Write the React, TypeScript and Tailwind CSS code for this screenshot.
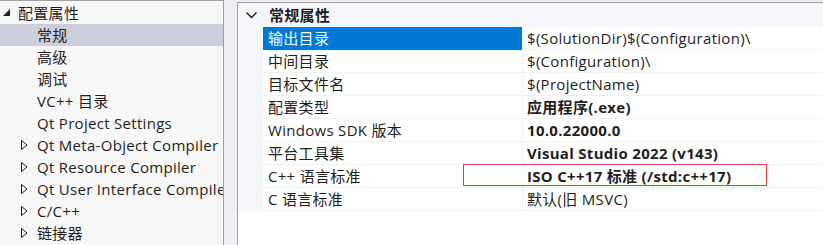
import React from "react";

const leftItems: { label: string; kind: "root" | "leaf" | "collapsed"; selected?: boolean }[] = [
  { label: "配置属性", kind: "root" },
  { label: "常规", kind: "leaf", selected: true },
  { label: "高级", kind: "leaf" },
  { label: "调试", kind: "leaf" },
  { label: "VC++ 目录", kind: "leaf" },
  { label: "Qt Project Settings", kind: "leaf" },
  { label: "Qt Meta-Object Compiler", kind: "collapsed" },
  { label: "Qt Resource Compiler", kind: "collapsed" },
  { label: "Qt User Interface Compiler", kind: "collapsed" },
  { label: "C/C++", kind: "collapsed" },
  { label: "链接器", kind: "collapsed" },
];

const props: { name: string; value: string; bold?: boolean; selected?: boolean }[] = [
  { name: "输出目录", value: "$(SolutionDir)$(Configuration)\\", selected: true },
  { name: "中间目录", value: "$(Configuration)\\" },
  { name: "目标文件名", value: "$(ProjectName)" },
  { name: "配置类型", value: "应用程序(.exe)", bold: true },
  { name: "Windows SDK 版本", value: "10.0.22000.0", bold: true },
  { name: "平台工具集", value: "Visual Studio 2022 (v143)", bold: true },
  { name: "C++ 语言标准", value: "ISO C++17 标准 (/std:c++17)", bold: true },
  { name: "C 语言标准", value: "默认(旧 MSVC)" },
];

const font = { fontFamily: '"Open Sans", "Noto Sans CJK SC", sans-serif' };

export default function App() {
  return (
    <div
      className="relative flex w-[823px] h-[245px] overflow-hidden bg-[#eeeef2] text-[15px] tracking-[0.3px] text-[#1e1e1e]"
      style={font}
    >
      {/* Left tree */}
      <div className="w-[224px] shrink-0 border-t border-r border-[#a0a0a0] bg-[#f7f7f7] pt-[1px]">
        {leftItems.map((it) => (
          <div
            key={it.label}
            className={`flex h-[22px] items-center whitespace-nowrap overflow-hidden ${
              it.selected ? "bg-[#cccedb]" : ""
            }`}
          >
            {it.kind === "root" && (
              <>
                <svg width="8" height="8" viewBox="0 0 8 8" className="ml-[3px] mr-[7px] shrink-0">
                  <polygon points="7,0 7,7 0,7" fill="#1e1e1e" />
                </svg>
                <span>{it.label}</span>
              </>
            )}
            {it.kind === "leaf" && <span className="ml-[37px]">{it.label}</span>}
            {it.kind === "collapsed" && (
              <>
                <svg width="7" height="10" viewBox="0 0 7 10" className="ml-[21px] mr-[9px] shrink-0">
                  <polygon points="0.5,0.5 6,5 0.5,9.5" fill="none" stroke="#1e1e1e" strokeWidth="1" />
                </svg>
                <span>{it.label}</span>
              </>
            )}
          </div>
        ))}
      </div>

      {/* Right property grid */}
      <div className="ml-[13px] mt-[2px] flex-1 border-t border-l border-[#a0a0a0] bg-white">
        <div className="flex h-[24px] items-center bg-[#f5f6fa]">
          <svg width="11" height="7" viewBox="0 0 11 7" className="ml-[8px] mr-[12px]">
            <polyline points="0.5,0.5 5.5,5.5 10.5,0.5" fill="none" stroke="#1e1e1e" strokeWidth="1.4" />
          </svg>
          <span className="font-bold">常规属性</span>
        </div>
        {props.map((p) => (
          <div key={p.name} className="flex h-[23px]">
            <div className="w-[25px] shrink-0 bg-[#f5f6fa]" />
            <div
              className={`flex w-[259px] shrink-0 items-center border-b pl-[5px] whitespace-nowrap ${
                p.selected ? "bg-[#0078d4] text-white border-[#0078d4]" : "border-[#f0f0f0]"
              }`}
            >
              {p.name}
            </div>
            <div
              className={`flex flex-1 items-center border-b border-l border-[#f0f0f0] pl-[4px] whitespace-nowrap ${
                p.bold ? "font-bold" : ""
              }`}
            >
              {p.value}
            </div>
          </div>
        ))}
      </div>

      <div className="absolute left-[463px] top-[164px] h-[22px] w-[304px] border-[1.5px] border-[#e2403f]" />
    </div>
  );
}
